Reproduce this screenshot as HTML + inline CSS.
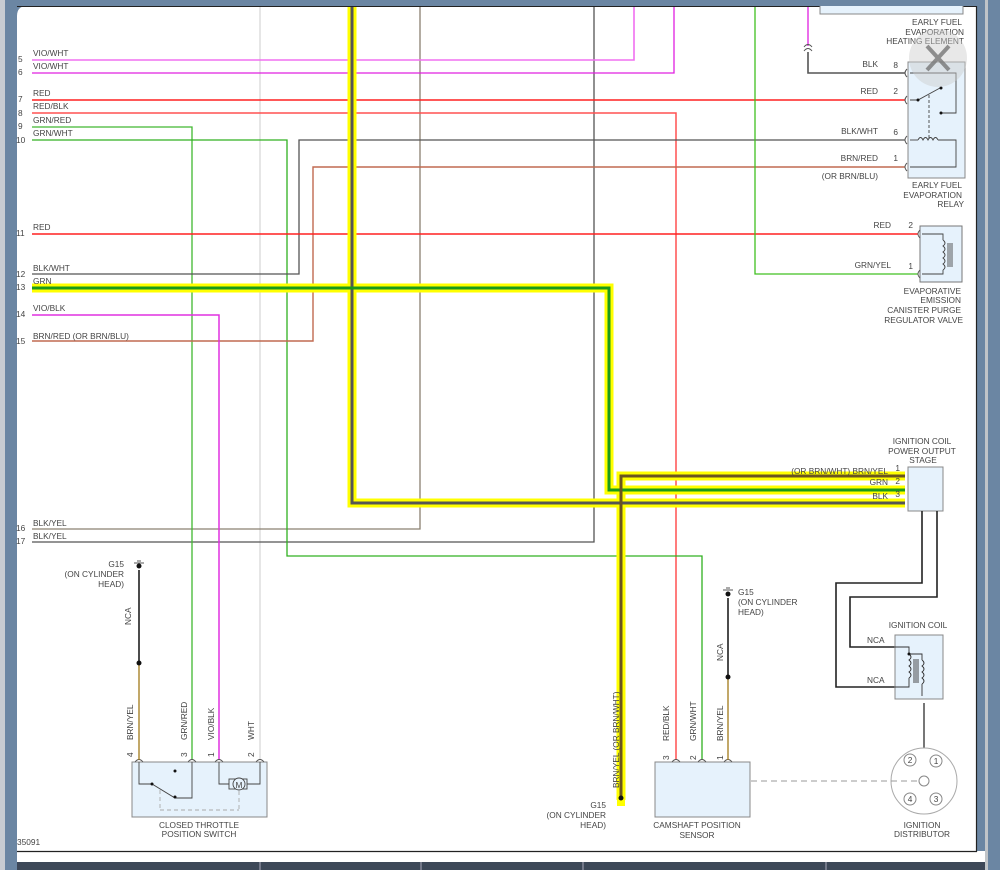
<!DOCTYPE html>
<html><head><meta charset="utf-8"><style>
html,body{margin:0;padding:0;width:1000px;height:870px;overflow:hidden;background:#6b86a3}
svg{display:block}
text{font-family:"Liberation Sans",sans-serif;font-size:8.3px;fill:#444}
</style></head><body>
<svg width="1000" height="870" viewBox="0 0 1000 870" xmlns="http://www.w3.org/2000/svg">
<rect x="0" y="0" width="1000" height="870" fill="#6b86a3"/>
<rect x="0" y="0" width="5" height="870" fill="#c8ccd2"/>
<rect x="985" y="0" width="3" height="870" fill="#c0c4c8"/>
<path d="M17 16 Q17 6 27 6 L976 6 L976 851 L17 851 Z" fill="#fff"/>
<rect x="17" y="851" width="968" height="12" fill="#fff"/>
<line x1="17" y1="851.5" x2="977" y2="851.5" stroke="#222" stroke-width="1.2"/>
<line x1="976.5" y1="6" x2="976.5" y2="852" stroke="#222" stroke-width="1.2"/>
<rect x="17" y="862" width="968" height="8" fill="#3d4858"/>
<g stroke="#aab" stroke-width="1"><line x1="260" y1="862" x2="260" y2="870"/><line x1="421" y1="862" x2="421" y2="870"/><line x1="583" y1="862" x2="583" y2="870"/><line x1="826" y1="862" x2="826" y2="870"/></g>
<rect x="17" y="6" width="960" height="1" fill="#222"/>

<g fill="none" stroke-width="1.3">
<!-- verticals from top -->
<line x1="260" y1="7" x2="260" y2="760" stroke="#d8d8d8"/>
<polyline points="420,7 420,529 32,529" stroke="#8a8070"/>
<polyline points="594,7 594,542 32,542" stroke="#555"/>
<polyline points="32,60 634,60 634,7" stroke="#f070f0" stroke-width="1.6"/>
<polyline points="32,73 674,73 674,7" stroke="#e020e0"/>
<line x1="808" y1="7" x2="808" y2="46" stroke="#e020e0"/>
<polyline points="808,52 808,73 905,73" stroke="#555" stroke-width="1.6"/>
<line x1="32" y1="100" x2="905" y2="100" stroke="#ff2020" stroke-width="1.5"/>
<polyline points="32,113 676,113 676,760" stroke="#ff5050" stroke-width="1.5"/>
<polyline points="32,127 192,127 192,760" stroke="#40b830"/>
<polyline points="32,140 287,140 287,556 702,556 702,760" stroke="#30b020"/>
<polyline points="905,140 299,140 299,274 32,274" stroke="#555"/>
<polyline points="905,167 313,167 313,341 32,341" stroke="#c06a50" stroke-width="1.4"/>
<line x1="32" y1="234" x2="918" y2="234" stroke="#ff2020" stroke-width="1.5"/>
<polyline points="755,7 755,274 918,274" stroke="#40c020"/>
<polyline points="32,315 219,315 219,760" stroke="#e030e0" stroke-width="1.5"/>
</g>
<!-- highlighted thick wires -->
<g fill="none" stroke-linejoin="miter">
<polyline points="352,7 352,503 905,503" stroke="#ffff00" stroke-width="9"/>
<polyline points="32,288 609,288 609,490 905,490" stroke="#ffff00" stroke-width="9"/>
<polyline points="905,476 621,476 621,800" stroke="#ffff00" stroke-width="9"/>
<polyline points="352,7 352,503 905,503" stroke="#555" stroke-width="3"/>
<polyline points="32,288 609,288 609,490 905,490" stroke="#1a9a1a" stroke-width="3"/>
<polyline points="905,476 621,476 621,800" stroke="#6a5520" stroke-width="3"/>
</g>
<rect x="617" y="796" width="8" height="10" fill="#ffff00"/>
<circle cx="621" cy="798" r="2.5" fill="#111"/>

<!-- wire labels left -->
<g>
<text x="33" y="56">VIO/WHT</text><text x="33" y="69">VIO/WHT</text>
<text x="33" y="96">RED</text><text x="33" y="109">RED/BLK</text>
<text x="33" y="123">GRN/RED</text><text x="33" y="136">GRN/WHT</text>
<text x="33" y="230">RED</text><text x="33" y="271">BLK/WHT</text>
<text x="33" y="284">GRN</text><text x="33" y="311">VIO/BLK</text>
<text x="33" y="339">BRN/RED (OR BRN/BLU)</text>
<text x="33" y="526">BLK/YEL</text><text x="33" y="539">BLK/YEL</text>
<text x="18" y="62">5</text><text x="18" y="75">6</text><text x="18" y="102">7</text><text x="18" y="116">8</text><text x="18" y="129">9</text><text x="16" y="143">10</text><text x="16" y="236">11</text><text x="16" y="277">12</text><text x="16" y="290">13</text><text x="16" y="317">14</text><text x="16" y="344">15</text><text x="16" y="531">16</text><text x="16" y="544">17</text>
<text x="17" y="845">35091</text>
</g>

<!-- heating element -->
<rect x="820" y="4" width="143" height="10" fill="#e6f2fc" stroke="#888"/>
<rect x="17" y="0" width="960" height="6" fill="#6b86a3"/>
<g text-anchor="end"><text x="962" y="25">EARLY FUEL</text><text x="964" y="35">EVAPORATION</text><text x="964" y="44">HEATING ELEMENT</text></g>
<path d="M804 47 Q808 42 812 47 M804 51 Q808 46 812 51" fill="none" stroke="#555"/>

<!-- relay -->
<rect x="908" y="62" width="57" height="116" fill="#e6f2fc" stroke="#888"/>
<g fill="none" stroke="#444" stroke-width="0.9">
<polyline points="910,73 956,73 956,113 941,113"/>
<polyline points="910,100 918,100 940,88"/>
<line x1="929" y1="95" x2="929" y2="138" stroke-dasharray="3,2"/>
<polyline points="910,140 918,140"/><path d="M918 140 q2.5 -5 5 0 q2.5 -5 5 0 q2.5 -5 5 0 q2.5 -5 5 0"/>
<polyline points="938,140 956,140 956,167 910,167"/>
</g>
<circle cx="918" cy="100" r="1.5" fill="#111"/><circle cx="941" cy="88" r="1.5" fill="#111"/><circle cx="941" cy="113" r="1.5" fill="#111"/>
<g fill="none" stroke="#555"><path d="M907 69 q-4 4 0 8 M907 96 q-4 4 0 8 M907 136 q-4 4 0 8 M907 163 q-4 4 0 8"/></g>
<g text-anchor="end"><text x="878" y="67">BLK</text><text x="878" y="94">RED</text><text x="878" y="134">BLK/WHT</text><text x="878" y="161">BRN/RED</text><text x="878" y="179">(OR BRN/BLU)</text>
<text x="898" y="68">8</text><text x="898" y="94">2</text><text x="898" y="135">6</text><text x="898" y="161">1</text>
<text x="962" y="188">EARLY FUEL</text><text x="962" y="198">EVAPORATION</text><text x="964" y="207">RELAY</text></g>
<!-- close X overlay -->
<circle cx="938" cy="58" r="29" fill="#ccc" opacity="0.45"/>
<path d="M927 46 L949 70 M949 46 L927 70" stroke="#777" stroke-width="4" opacity="0.8"/>

<!-- canister valve -->
<rect x="920" y="226" width="42" height="56" fill="#e6f2fc" stroke="#777"/>
<g fill="none" stroke="#444" stroke-width="0.9">
<polyline points="922,234 943,234 943,240"/><path d="M943 240 q4 3 0 6 q4 3 0 6 q4 3 0 6 q4 3 0 6 q4 3 0 6"/><polyline points="943,270 943,274 922,274"/>
<line x1="948" y1="243" x2="948" y2="267"/><line x1="950" y1="243" x2="950" y2="267"/><line x1="952" y1="243" x2="952" y2="267"/>
<path d="M920 230 q-4 4 0 8 M920 270 q-4 4 0 8" stroke="#555"/>
</g>
<g text-anchor="end"><text x="891" y="228">RED</text><text x="891" y="268">GRN/YEL</text><text x="913" y="228">2</text><text x="913" y="269">1</text>
<text x="961" y="294">EVAPORATIVE</text><text x="961" y="303">EMISSION</text><text x="961" y="313">CANISTER PURGE</text><text x="963" y="323">REGULATOR VALVE</text></g>

<!-- ignition coil power output stage -->
<rect x="908" y="467" width="35" height="44" fill="#e6f2fc" stroke="#888"/>
<g text-anchor="middle"><text x="922" y="444">IGNITION COIL</text><text x="922" y="454">POWER OUTPUT</text><text x="923" y="463">STAGE</text></g>
<g text-anchor="end"><text x="888" y="474">(OR BRN/WHT) BRN/YEL</text><text x="888" y="485">GRN</text><text x="888" y="499">BLK</text><text x="900" y="471">1</text><text x="900" y="484">2</text><text x="900" y="497">3</text></g>
<g fill="none" stroke="#222" stroke-width="1.6">
<polyline points="922,511 922,583 836,583 836,687 907,687"/>
<polyline points="937,511 937,597 850,597 850,647 907,647"/>
</g>
<!-- ignition coil -->
<rect x="895" y="635" width="48" height="64" fill="#e6f2fc" stroke="#888"/>
<g fill="none" stroke="#333" stroke-width="0.9">
<polyline points="895,647 909,647 909,654"/><path d="M909 654 q4 3 0 6 q4 3 0 6 q4 3 0 6 q4 3 0 6"/><polyline points="909,678 909,687 895,687"/>
<polyline points="909,654 922,654 922,660"/><path d="M922 660 q4 3 0 6 q4 3 0 6 q4 3 0 6 q4 3 0 6"/><line x1="922" y1="684" x2="922" y2="696"/>
<line x1="914" y1="659" x2="914" y2="683"/><line x1="916" y1="659" x2="916" y2="683"/><line x1="918" y1="659" x2="918" y2="683"/>
</g>
<circle cx="909" cy="654" r="1.5" fill="#111"/>
<text x="918" y="628" text-anchor="middle">IGNITION COIL</text>
<text x="867" y="643">NCA</text><text x="867" y="683">NCA</text>
<line x1="924" y1="703" x2="924" y2="778" stroke="#555" stroke-width="1.6"/>
<!-- distributor -->
<circle cx="924" cy="781" r="33" fill="#fff" stroke="#aaa"/>
<circle cx="924" cy="781" r="5" fill="#fff" stroke="#888"/>
<g fill="#fff" stroke="#888"><circle cx="910" cy="760" r="6"/><circle cx="936" cy="761" r="6"/><circle cx="910" cy="799" r="6"/><circle cx="936" cy="799" r="6"/></g>
<g text-anchor="middle"><text x="910" y="763">2</text><text x="936" y="764">1</text><text x="910" y="802">4</text><text x="936" y="802">3</text>
<text x="922" y="828">IGNITION</text><text x="922" y="837">DISTRIBUTOR</text></g>
<line x1="751" y1="781" x2="918" y2="781" stroke="#999" stroke-dasharray="6,4"/>

<!-- camshaft sensor -->
<rect x="655" y="762" width="95" height="55" fill="#e6f2fc" stroke="#888"/>
<g text-anchor="middle"><text x="697" y="828">CAMSHAFT POSITION</text><text x="697" y="838">SENSOR</text></g>
<g fill="none" stroke="#555"><path d="M672 762 q4 -5 8 0 M698 762 q4 -5 8 0 M724 762 q4 -5 8 0"/></g>
<line x1="728" y1="598" x2="728" y2="677" stroke="#111" stroke-width="1.5"/>
<line x1="728" y1="677" x2="728" y2="760" stroke="#a07818" stroke-width="1.3"/>
<circle cx="728" cy="677" r="2.5" fill="#111"/><circle cx="728" cy="594" r="2.5" fill="#111"/>
<path d="M723 590 h10 M726 588 h4" stroke="#555"/>
<text x="738" y="595">G15</text><text x="738" y="605">(ON CYLINDER</text><text x="738" y="615">HEAD)</text>
<g><text transform="translate(723,661) rotate(-90)">NCA</text>
<text transform="translate(669,741) rotate(-90)">RED/BLK</text><text transform="translate(696,741) rotate(-90)">GRN/WHT</text><text transform="translate(723,741) rotate(-90)">BRN/YEL</text>
<text transform="translate(669,760) rotate(-90)">3</text><text transform="translate(696,760) rotate(-90)">2</text><text transform="translate(723,760) rotate(-90)">1</text>
<text transform="translate(619,788) rotate(-90)">BRN/YEL (OR BRN/WHT)</text></g>
<g text-anchor="end"><text x="606" y="808">G15</text><text x="606" y="818">(ON CYLINDER</text><text x="606" y="828">HEAD)</text></g>

<!-- throttle switch -->
<rect x="132" y="762" width="135" height="55" fill="#e6f2fc" stroke="#888"/>
<g fill="none" stroke="#444" stroke-width="0.9">
<polyline points="139,762 139,784 152,784 175,798 192,798 192,762"/>
<polyline points="219,762 219,784 229,784"/><polyline points="247,784 260,784 260,762"/>
<line x1="160" y1="790" x2="160" y2="810" stroke="#aaa" stroke-dasharray="4,3"/>
<line x1="160" y1="810" x2="239" y2="810" stroke="#aaa" stroke-dasharray="4,3"/>
<line x1="239" y1="791" x2="239" y2="810" stroke="#aaa" stroke-dasharray="4,3"/>
<rect x="229" y="779" width="18" height="10" />
<path d="M135 762 q4 -5 8 0 M188 762 q4 -5 8 0 M215 762 q4 -5 8 0 M256 762 q4 -5 8 0" stroke="#555"/>
</g>
<circle cx="239" cy="784" r="6" fill="#e6f2fc" stroke="#444" stroke-width="0.9"/>
<text x="239" y="788" text-anchor="middle" font-size="9">M</text>
<circle cx="152" cy="784" r="1.5" fill="#111"/><circle cx="175" cy="797" r="1.5" fill="#111"/><circle cx="175" cy="771" r="1.5" fill="#111"/>
<g text-anchor="middle"><text x="199" y="828">CLOSED THROTTLE</text><text x="199" y="837">POSITION SWITCH</text></g>
<line x1="139" y1="570" x2="139" y2="663" stroke="#111" stroke-width="1.5"/>
<line x1="139" y1="663" x2="139" y2="760" stroke="#a07818" stroke-width="1.3"/>
<circle cx="139" cy="663" r="2.5" fill="#111"/><circle cx="139" cy="566" r="2.5" fill="#111"/>
<path d="M134 563 h10 M137 561 h4" stroke="#555"/>
<g text-anchor="end"><text x="124" y="567">G15</text><text x="124" y="577">(ON CYLINDER</text><text x="124" y="587">HEAD)</text></g>
<g><text transform="translate(131,625) rotate(-90)">NCA</text>
<text transform="translate(133,740) rotate(-90)">BRN/YEL</text><text transform="translate(187,740) rotate(-90)">GRN/RED</text>
<text transform="translate(214,740) rotate(-90)">VIO/BLK</text><text transform="translate(254,740) rotate(-90)">WHT</text>
<text transform="translate(133,757) rotate(-90)">4</text><text transform="translate(187,757) rotate(-90)">3</text><text transform="translate(214,757) rotate(-90)">1</text><text transform="translate(254,757) rotate(-90)">2</text></g>
</svg>
</body></html>
